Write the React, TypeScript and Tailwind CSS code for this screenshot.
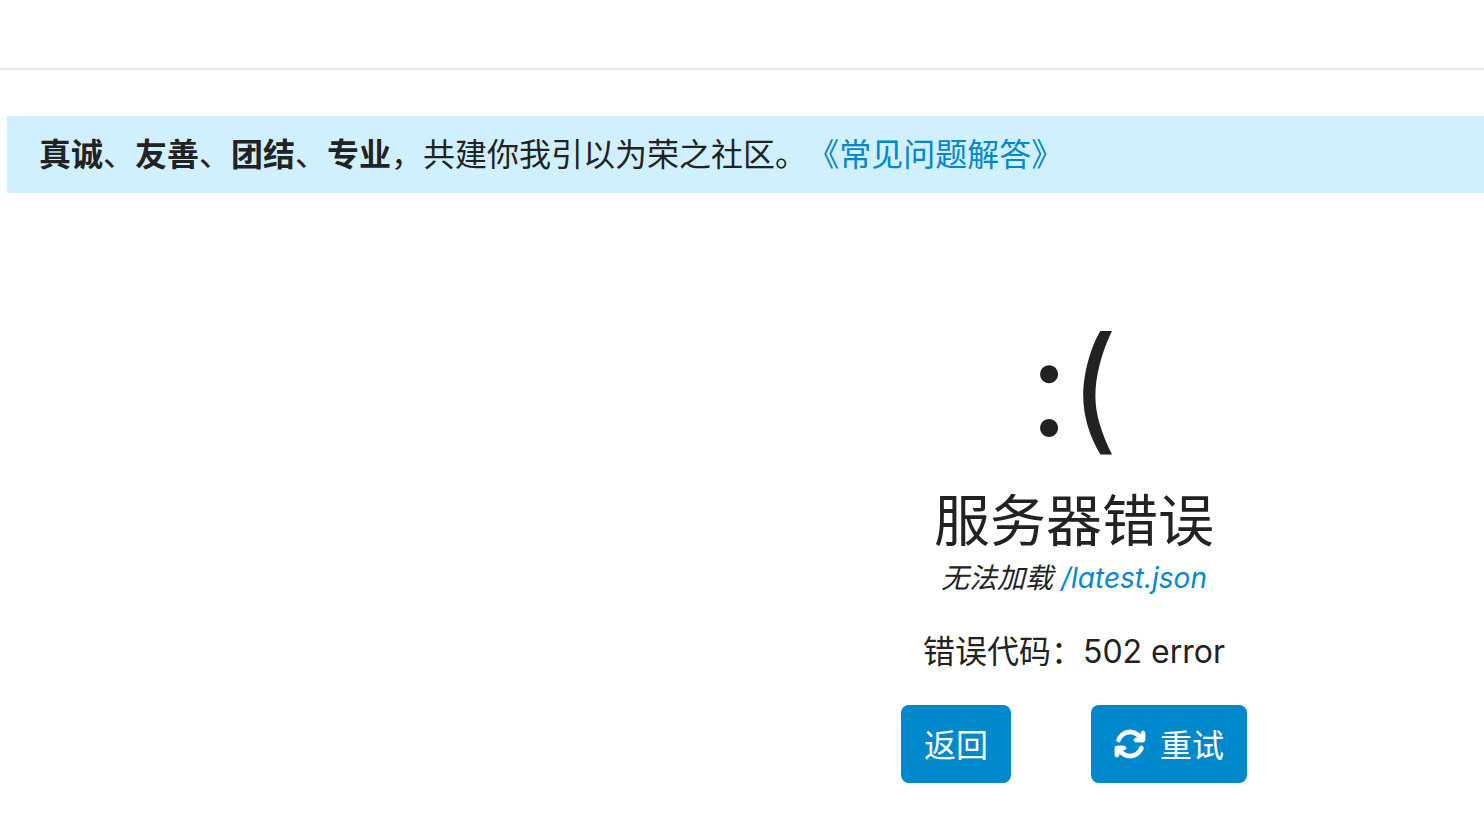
import { FaArrowsRotate } from "react-icons/fa6";

export default function App() {
  return (
    <div className="min-h-screen overflow-x-hidden bg-white font-[Inter,'Noto_Sans_CJK_SC',sans-serif] text-[32px] leading-[45px] text-[#222222] [text-spacing-trim:space-all]">
      <header className="h-[70px] border-b-2 border-[#e8e8e8]" />
      <main className="pt-[46px] pl-[7px]">
        <div className="bg-[#d1f0ff] px-8 py-4">
          <p>
            <b>真诚</b>、<b>友善</b>、<b>团结</b>、<b>专业</b>，共建你我引以为荣之社区。
            <a href="#faq" className="text-[#0088cc]">《常见问题解答》</a>
          </p>
        </div>
        <section className="ml-[894px] flex w-[346px] flex-col pt-[97px]">
          <div className="text-center text-[136px] leading-[193px]">:(</div>
          <h1 className="text-center text-[56px] leading-[76px]">服务器错误</h1>
          <p className="text-center text-[28px] leading-[38px] italic">
            无法加载 <a href="#latest" className="text-[#0088cc]">/latest.json</a>
          </p>
          <p className="mt-8 text-center">错误代码：502 error</p>
          <div className="mt-[31px] flex justify-between text-white">
            <button type="button" className="h-[78px] rounded-lg bg-[#0088cc] px-[23px] pt-0.5">返回</button>
            <button type="button" className="flex h-[78px] items-center gap-[14px] rounded-lg bg-[#0088cc] px-[23px]">
              <FaArrowsRotate className="size-[32px] stroke-current [stroke-linejoin:round] [stroke-width:12]" />
              <span className="pt-0.5">重试</span>
            </button>
          </div>
        </section>
      </main>
    </div>
  );
}
